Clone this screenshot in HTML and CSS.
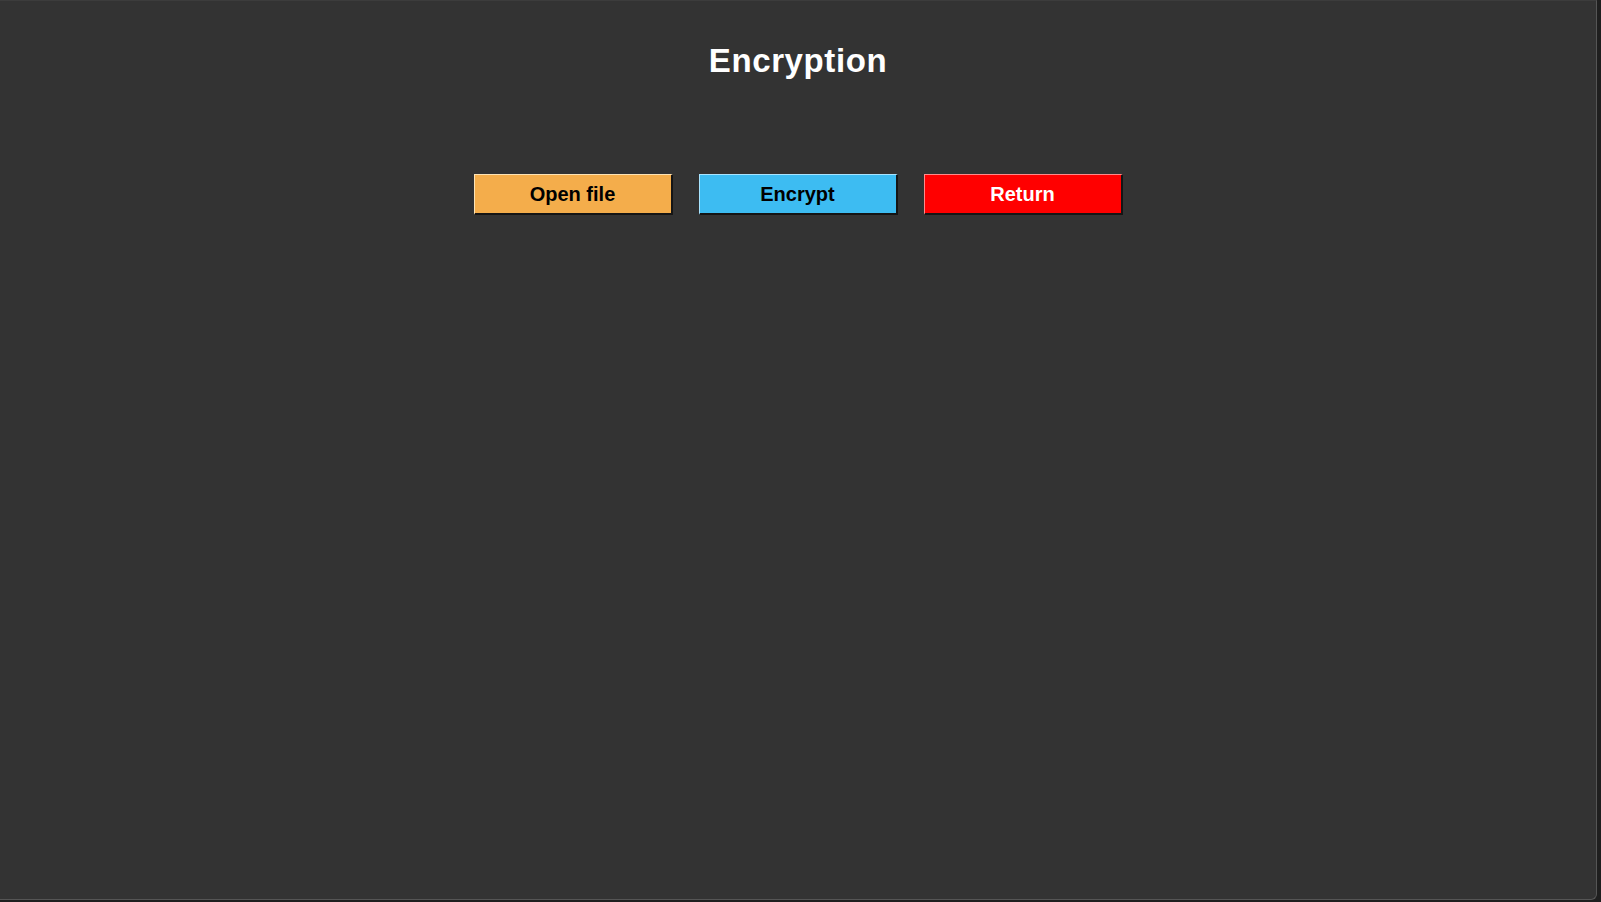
FILE: index.html
```html
<!DOCTYPE html>
<html lang="en">
<head>
<meta charset="utf-8">
<title>Encryption</title>
<link rel="stylesheet" href="styles.css">
</head>
<body>
<div class="window">
  <h1 class="title">Encryption</h1>
  <div class="actions">
    <button class="btn btn-open">Open file</button>
    <button class="btn btn-encrypt">Encrypt</button>
    <button class="btn btn-return">Return</button>
  </div>
</div>
</body>
</html>
```
FILE: styles.css
```css
html, body {
  margin: 0;
  padding: 0;
  background: #1f1f1f;
  width: 1601px;
  height: 902px;
  overflow: hidden;
}

.window {
  box-sizing: border-box;
  width: 1597px;
  height: 900px;
  background: #333333;
  border-top: 1px solid #3c3c3c;
  border-right: 1px solid #555555;
  border-bottom: 1px solid #555555;
  border-bottom-right-radius: 6px;
  display: flex;
  flex-direction: column;
  align-items: center;
  font-family: "Liberation Sans", Arial, sans-serif;
}

.title {
  margin: 41px 0 0 0;
  font-size: 33px;
  font-weight: bold;
  letter-spacing: 0.6px;
  line-height: normal;
  color: #ffffff;
}

.actions {
  margin-top: 94px;
  display: flex;
  gap: 26px;
}

.btn {
  box-sizing: border-box;
  width: 199px;
  height: 41px;
  padding: 0;
  font-family: "Liberation Sans", Arial, sans-serif;
  font-size: 20px;
  font-weight: bold;
  border-style: solid;
  border-width: 1px 2px 2px 1px;
  border-right-color: #151515;
  border-bottom-color: #151515;
  cursor: pointer;
}

.btn-open {
  background: #f4ad4b;
  color: #000000;
  border-top-color: #fde3b5;
  border-left-color: #fde3b5;
}

.btn-encrypt {
  background: #3dbcf2;
  color: #000000;
  border-top-color: #a8e4ff;
  border-left-color: #a8e4ff;
}

.btn-return {
  background: #ff0000;
  color: #ffffff;
  border-top-color: #ff8a8a;
  border-left-color: #ff8a8a;
}
```
